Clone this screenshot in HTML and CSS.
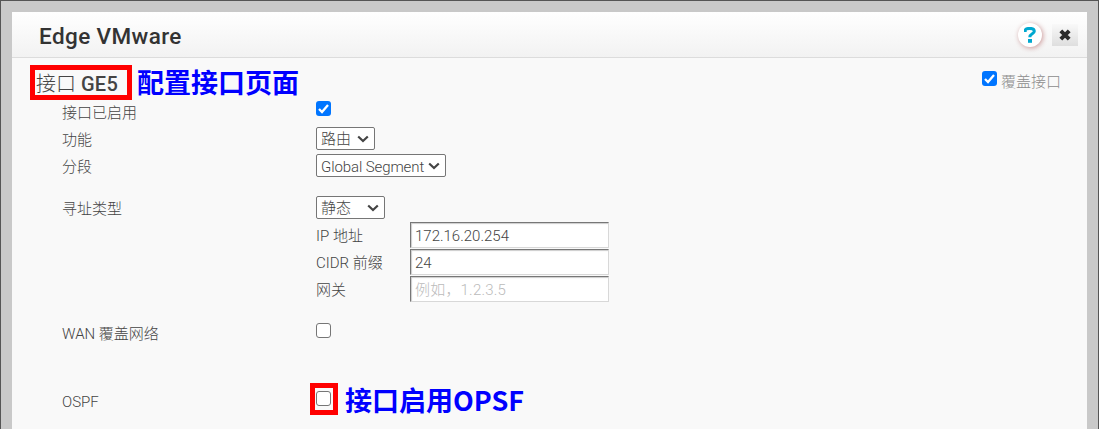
FILE: index.html
```html
<!DOCTYPE html>
<html lang="zh-CN">
<head>
<meta charset="utf-8">
<title>Edge VMware</title>
<link rel="stylesheet" href="styles.css">
</head>
<body>
<div class="backdrop">
<main class="dialog">
  <header class="titlebar">
    <h1>Edge VMware</h1>
    <button class="help" aria-label="?"><svg width="12" height="16" viewBox="0 0 12 16"><path d="M1.2 5V3.8C1.2 1.9 3 1.4 5.8 1.4S10.3 2.1 10.3 4.3C10.3 7.1 5.8 6.6 5.8 10.3" fill="none" stroke="#00a8d0" stroke-width="3"/><path d="M4 12h4v3.8H4z" fill="#00a8d0"/></svg></button>
    <button class="close" aria-label="×"><svg width="12" height="12" viewBox="0 0 12 12"><path d="M1.8 1.8l8.4 8.4M10.2 1.8l-8.4 8.4" stroke="#2b2b2b" stroke-width="4"/></svg></button>
  </header>
  <div class="heading">
    <h2 class="marked">接口 <b>GE5</b></h2>
    <span class="note">配置接口页面</span>
    <label class="override"><span class="check on"><svg width="15" height="15" viewBox="0 0 15 15"><path d="M3 8l3 3 6-7" /></svg></span><span class="override-text">覆盖接口</span></label>
  </div>
  <div class="form">
    <div class="row enabled"><span class="label">接口已启用</span><span class="check on"><svg width="15" height="15" viewBox="0 0 15 15"><path d="M3 8l3 3 6-7" /></svg></span></div>
    <div class="row"><span class="label">功能</span><span class="select w59"><span>路由</span><svg width="12" height="8" viewBox="0 0 12 8"><path d="M1.2 1.5L6 6l4.8-4.5"/></svg></span></div>
    <div class="row"><span class="label">分段</span><span class="select w130"><span class="segment">Global Segment</span><svg width="12" height="8" viewBox="0 0 12 8"><path d="M1.2 1.5L6 6l4.8-4.5"/></svg></span></div>
    <div class="row address"><span class="label">寻址类型</span><span class="select w69"><span>静态</span><svg width="12" height="8" viewBox="0 0 12 8"><path d="M1.2 1.5L6 6l4.8-4.5"/></svg></span></div>
    <div class="row sub"><span class="sublabel">IP 地址</span><span class="field digits">172.16.20.254</span></div>
    <div class="row sub"><span class="sublabel">CIDR 前缀</span><span class="field">24</span></div>
    <div class="row sub"><span class="sublabel">网关</span><span class="field placeholder">例如，1.2.3.5</span></div>
    <div class="row wan"><span class="label">WAN 覆盖网络</span><span class="check"></span></div>
    <div class="row ospf"><span class="label">OSPF</span><span class="check-mark"><span class="check"></span></span><span class="note">接口启用OPSF</span></div>
  </div>
</main>
</div>
</body>
</html>
```
FILE: styles.css
```css
* { box-sizing: border-box; }
body {
  margin: 0;
  width: 1099px;
  height: 431px;
  overflow: hidden;
  background: #fff;
  font: 300 15px/20px Roboto, "Noto Sans CJK SC", sans-serif;
  color: #444;
}
.backdrop {
  height: 429px;
  padding: 11px 11px 0;
  border: 1px solid #555;
  border-bottom: 0;
  background: #c9c9c9;
}
.dialog { width: 1075px; height: 417px; background: #f9f9f9; }
.titlebar {
  display: flex;
  align-items: center;
  height: 46px;
  padding: 0 9px 0 27px;
  background: linear-gradient(#fff, #f2f2f2);
  border-bottom: 1px solid #dcdcdc;
}
h1 { flex: 1; margin: 3px 0 0; font: 500 22.5px/30px Roboto, sans-serif; letter-spacing: .4px; color: #333; }
button { display: grid; place-items: center; border: 0; padding: 0; }
.help { width: 24px; height: 24px; margin-right: 10px; border-radius: 50%; background: #fff; box-shadow: 1px 1px 5px #c99; }
.close { width: 26px; height: 22px; background: linear-gradient(#f9f9f9, #dedede); }
.heading { display: flex; height: 42px; padding: 7px 25px 0 18px; }
.marked { width: 102px; height: 35px; margin: 0; border: 5px solid red; padding: 0 0 0 1px; font-size: 20px; line-height: 28px; font-weight: 300; white-space: nowrap; }
.marked b { font-weight: 500; letter-spacing: .3px; }
.note { color: #00f; font: 700 27px/36px "Noto Sans CJK SC", sans-serif; white-space: nowrap; }
.heading .note { margin: -1px 0 0 5px; }
.override { display: flex; gap: 4px; margin: 6px 1px 0 auto; color: #8c8c8c; }
.override-text { margin-top: 1px; }
.check { display: block; width: 15px; height: 15px; border: 1px solid #767676; border-radius: 3px; background: #fff; }
.check.on { border: 0; background: #0075ff; }
.check svg { display: block; fill: none; stroke: #fff; stroke-width: 2.3; }
.form { padding-left: 50px; }
.row { display: flex; align-items: center; height: 27px; }
.row.enabled { height: 25px; }
.row.enabled .check { margin-bottom: 8px; }
.row.enabled .label { padding: 0; }
.label { width: 254px; padding-top: 2px; white-space: nowrap; }
.select { display: flex; align-items: center; justify-content: space-between; height: 23px; padding: 0 5px 0 4px; border: 1px solid #767676; border-radius: 2px; background: #fff; white-space: nowrap; }
.select svg { fill: none; stroke: #444; stroke-width: 2.2; }
.segment { letter-spacing: -.1px; padding-top: 2px; }
.w59 { width: 59px; }
.w69 { width: 69px; }
.w130 { width: 130px; }
.row.address { margin-top: 15px; height: 27px; }
.sub { padding-left: 254px; }
.sublabel { width: 94px; padding-top: 2px; }
.field { width: 199px; height: 26px; padding: 3px 4px 1px; border: 1px solid #d8d8d8; border-top: 1px solid #777; border-left: 1px solid #777; background: #fff; box-shadow: inset 1px 1px 1px #ccc; }
.placeholder { color: #bbb; letter-spacing: .2px; }
.wan { margin-top: 17px; }
.wan .check { margin-bottom: 4px; }
.ospf { margin-top: 41px; }
.ospf .label { width: 248px; }
.check-mark { width: 28px; height: 32px; padding: 3px 1px; border: 5px solid red; margin-bottom: 4px; }
.ospf .note { margin: 0 0 1px 7px; }
```
